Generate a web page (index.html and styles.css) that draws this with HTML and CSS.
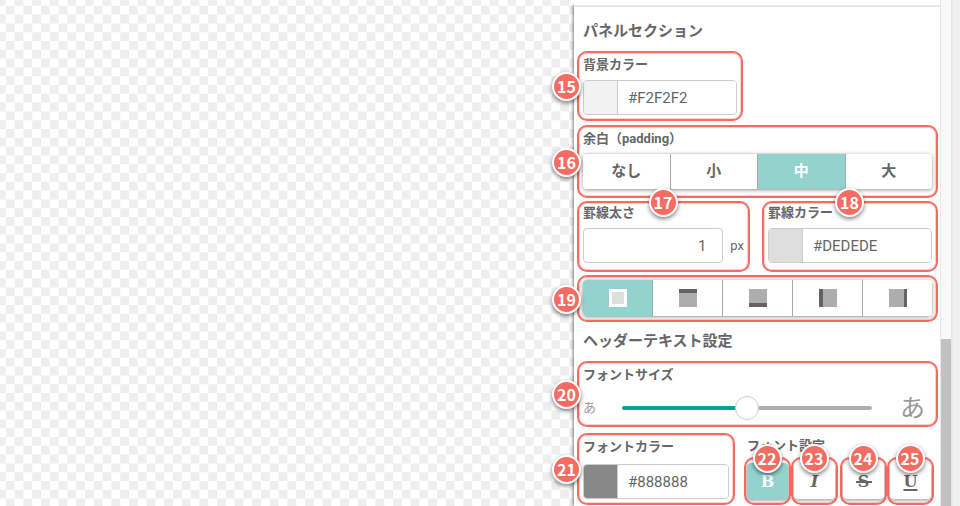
FILE: index.html
```
<!DOCTYPE html>
<html lang="ja">
<head>
  <meta charset="UTF-8">
  <meta name="viewport" content="width=device-width, initial-scale=1.0">
  <title>パネルセクション</title>
  <link rel="stylesheet" href="styles.css">
</head>
<body>
  <div class="editor">
    <main class="canvas"></main>
    <aside class="panel">
      <h2>パネルセクション</h2>

      <div class="group bg-color">
        <span class="badge side">15</span>
        <label for="bgColor">背景カラー</label>
        <div class="color-field">
          <span class="swatch light"></span>
          <input type="text" id="bgColor" value="#F2F2F2">
        </div>
      </div>

      <div class="group padding">
        <span class="badge side">16</span>
        <span class="label">余白（padding）</span>
        <div class="segments">
          <button type="button">なし</button>
          <button type="button">小</button>
          <button type="button" class="active">中</button>
          <button type="button">大</button>
        </div>
      </div>

      <div class="row">
        <div class="group line line-width">
          <span class="badge top">17</span>
          <label for="lineWidth">罫線太さ</label>
          <div class="unit-field">
            <input type="text" id="lineWidth" value="1">
            <span>px</span>
          </div>
        </div>
        <div class="group line line-color">
          <span class="badge top">18</span>
          <label for="lineColor">罫線カラー</label>
          <div class="color-field">
            <span class="swatch silver"></span>
            <input type="text" id="lineColor" value="#DEDEDE">
          </div>
        </div>
      </div>

      <div class="group sides">
        <span class="badge side">19</span>
        <div class="segments">
          <button type="button" class="active" aria-label="全体">
            <svg width="18" height="18" viewBox="0 0 18 18"><path fill="#fff" d="M0 0h18v18H0z"/><path fill="#dedede" d="M3 3h12v12H3z"/></svg>
          </button>
          <button type="button" aria-label="上">
            <svg width="18" height="18" viewBox="0 0 18 18"><path fill="#adadad" d="M0 0h18v18H0z"/><path fill="#636363" d="M0 0h18v4H0z"/></svg>
          </button>
          <button type="button" aria-label="下">
            <svg width="18" height="18" viewBox="0 0 18 18"><path fill="#adadad" d="M0 0h18v18H0z"/><path fill="#636363" d="M0 14h18v4H0z"/></svg>
          </button>
          <button type="button" aria-label="左">
            <svg width="18" height="18" viewBox="0 0 18 18"><path fill="#adadad" d="M0 0h18v18H0z"/><path fill="#636363" d="M0 0h4v18H0z"/></svg>
          </button>
          <button type="button" aria-label="右">
            <svg width="18" height="18" viewBox="0 0 18 18"><path fill="#adadad" d="M0 0h18v18H0z"/><path fill="#636363" d="M15 0h3v18h-3z"/></svg>
          </button>
        </div>
      </div>

      <h2 class="second">ヘッダーテキスト設定</h2>

      <div class="group font-size">
        <span class="badge side">20</span>
        <label for="fontSize">フォントサイズ</label>
        <div class="slider">
          <span class="small">あ</span>
          <input type="range" id="fontSize" min="0" max="100" value="50">
          <span class="large">あ</span>
        </div>
      </div>

      <div class="row last">
        <div class="group font-color">
          <span class="badge side">21</span>
          <label for="fontColor">フォントカラー</label>
          <div class="color-field">
            <span class="swatch gray"></span>
            <input type="text" id="fontColor" value="#888888">
          </div>
        </div>
        <div class="font-style">
          <span class="label">フォント設定</span>
          <div class="style-buttons">
            <div class="group style">
              <span class="badge top">22</span>
              <button type="button" class="bold active">B</button>
            </div>
            <div class="group style">
              <span class="badge top">23</span>
              <button type="button" class="italic">I</button>
            </div>
            <div class="group style split">
              <span class="badge top">24</span>
              <button type="button" class="strike">S</button>
            </div>
            <div class="group style">
              <span class="badge top">25</span>
              <button type="button" class="underline">U</button>
            </div>
          </div>
        </div>
      </div>
    </aside>
    <div class="scrollbar"><div class="thumb"></div></div>
    <div class="gutter"></div>
  </div>
</body>
</html>
```
FILE: styles.css
```
* {
  box-sizing: border-box;
}

body {
  margin: 0;
  color: #666;
  font-family: Roboto, "Noto Sans CJK JP", sans-serif;
  font-size: 13px;
}

.editor {
  display: flex;
  height: 100vh;
  overflow: hidden;
}

.canvas {
  flex: 1;
  background-color: #fff;
  background-image: url("data:image/svg+xml,%3Csvg xmlns='http://www.w3.org/2000/svg' viewBox='0 0 10 10'%3E%3Cpath fill='%23eee' d='M0 0h1v1H0zM2 0h1v1H2zM4 0h1v1H4zM6 0h1v1H6zM8 0h1v1H8zM1 1h1v1H1zM3 1h1v1H3zM5 1h1v1H5zM7 1h1v1H7zM9 1h1v1H9zM0 2h1v1H0zM2 2h1v1H2zM4 2h1v1H4zM6 2h1v1H6zM8 2h1v1H8zM1 3h1v1H1zM3 3h1v1H3zM5 3h1v1H5zM7 3h1v1H7zM9 3h1v1H9zM0 4h1v1H0zM2 4h1v1H2zM4 4h1v1H4zM6 4h1v1H6zM8 4h1v1H8zM1 5h1v1H1zM3 5h1v1H3zM5 5h1v1H5zM7 5h1v1H7zM9 5h1v1H9zM0 6h1v1H0zM2 6h1v1H2zM4 6h1v1H4zM6 6h1v1H6zM8 6h1v1H8zM1 7h1v1H1zM3 7h1v1H3zM5 7h1v1H5zM7 7h1v1H7zM9 7h1v1H9zM0 8h1v1H0zM2 8h1v1H2zM4 8h1v1H4zM6 8h1v1H6zM8 8h1v1H8zM1 9h1v1H1zM3 9h1v1H3zM5 9h1v1H5zM7 9h1v1H7zM9 9h1v1H9z'/%3E%3C/svg%3E");
  background-size: 88px 88px;
  background-position: -3px -3px;
}

.panel {
  width: 366px;
  margin-top: 5px;
  padding: 14px 2px 0 3px;
  border-top: 2px solid #e8e8e8;
  background-color: #fff;
  box-shadow: 0 -8px 0 #fff, -1px 0 3px rgba(0, 0, 0, 0.5);
}

h2 {
  margin: 0;
  padding-left: 6px;
  font-size: 15px;
  line-height: 20px;
}

h2.second {
  margin: 9px 0 10px;
}

.group {
  position: relative;
  padding: 4px;
  border: 2px solid #f66c63;
  border-radius: 10px;
  box-shadow: inset 0 0 0 1px #fcd0cd;
}

label,
.label {
  display: block;
  font-weight: bold;
  line-height: 16px;
  margin-bottom: 7px;
}

.badge {
  position: absolute;
  z-index: 1;
  width: 29px;
  height: 29px;
  border: 2px solid #fff;
  border-radius: 50%;
  background-color: #f66c63;
  color: #fff;
  font: bold 16px/24px "Noto Sans CJK JP", sans-serif;
  text-align: center;
  box-shadow: 0 2px 4px rgba(0, 0, 0, 0.5);
}

.badge.side {
  left: -27px;
  top: calc(50% - 14px);
}

.badge.top {
  left: calc(50% - 15px);
  top: -15px;
}

.bg-color {
  width: 166px;
  margin-top: 10px;
}

.padding {
  margin-top: 4px;
  padding-bottom: 7px;
}

.row {
  display: flex;
  justify-content: space-between;
  margin-top: 3px;
}

.line {
  padding-top: 2px;
  padding-bottom: 7px;
}

.line-width {
  width: 173px;
}

.line-color {
  width: 176px;
}

.color-field {
  display: flex;
  height: 35px;
  border: 1px solid #ccc;
  border-radius: 4px;
  overflow: hidden;
}

.swatch {
  width: 34px;
  border-right: 1px solid #ccc;
}

.swatch.light {
  background-color: #f2f2f2;
}

.swatch.silver {
  background-color: #dedede;
}

.swatch.gray {
  background-color: #888;
}

input[type="text"] {
  min-width: 0;
  border: none;
  background-color: #fff;
  color: #666;
  font: 15px Roboto, sans-serif;
}

.color-field input {
  flex: 1;
  padding: 0 10px;
}

.unit-field {
  display: flex;
  align-items: center;
  gap: 7px;
  height: 35px;
}

.unit-field input[type="text"] {
  width: 141px;
  height: 35px;
  padding: 0 16px;
  border: 1px solid #ccc;
  border-radius: 4px;
  text-align: right;
}

.segments {
  display: flex;
  height: 35px;
  border-radius: 4px;
  box-shadow: 0 1px 4px rgba(0, 0, 0, 0.4);
}

button {
  flex: 1;
  padding: 0;
  border: none;
  background-color: #fff;
  color: #666;
  font: bold 15px Roboto, "Noto Sans CJK JP", sans-serif;
  cursor: pointer;
}

.segments button {
  border-right: 1px solid #aaa;
  box-shadow: 1px 0 2px rgba(0, 0, 0, 0.15);
}

.padding button {
  padding-bottom: 5px;
}

.segments button:first-child {
  border-radius: 4px 0 0 4px;
}

.segments button:last-child {
  border-right: none;
  border-radius: 0 4px 4px 0;
  box-shadow: none;
}

button.active {
  background-color: #92d3cd;
  color: #fff;
}

.segments button.active {
  border-right-color: #8bbab6;
}

button svg {
  display: block;
  margin: auto;
}

.sides {
  margin-top: 3px;
  padding: 3px 4px 4px;
}

.sides .segments {
  height: 36px;
}

.font-size {
  height: 66px;
}

.slider {
  display: flex;
  align-items: center;
  height: 36px;
  color: #999;
  font-family: "Noto Sans CJK JP", sans-serif;
}

.slider .small {
  width: 39px;
  padding-bottom: 4px;
  font-size: 13px;
}

.slider .large {
  width: 32px;
  padding-bottom: 5px;
  font-size: 25px;
}

.slider input {
  flex: 1;
  min-width: 0;
  height: 24px;
  margin: 0 28px 0 0;
  background: none;
  appearance: none;
}

.slider input::-webkit-slider-runnable-track {
  height: 4px;
  border-radius: 2px;
  background: linear-gradient(to right, #00a396 50%, #b0b0b0 50%);
}

.slider input::-webkit-slider-thumb {
  width: 24px;
  height: 24px;
  margin-top: -10px;
  border: 1px solid #ccc;
  border-radius: 50%;
  background-color: #fff;
  appearance: none;
}

.row.last {
  justify-content: flex-start;
  gap: 9px;
  margin-top: 6px;
}

.font-color {
  width: 158px;
  height: 72px;
}

.font-color label {
  margin-bottom: 9px;
}

.font-style {
  padding-top: 5px;
}

.font-style .label {
  margin-bottom: 3px;
  padding-left: 3px;
}

.style-buttons {
  display: flex;
}

.style {
  display: flex;
  width: 47px;
  height: 48px;
  padding: 4px 1px;
}

.style.split {
  margin-left: 2px;
}

.style button {
  position: relative;
  border-radius: 4px;
  font-size: 16px;
  font-family: "DejaVu Serif", serif;
  box-shadow: 0 2px 3px rgba(0, 0, 0, 0.3);
}

.style .italic {
  font-style: italic;
}

/* strike line is wider than the letter */
.style .strike::after {
  content: "";
  position: absolute;
  top: 50%;
  left: calc(50% - 8px);
  width: 16px;
  height: 2px;
  background-color: #666;
}

.style .underline {
  text-decoration: underline 2px;
  text-underline-offset: 2px;
}

.scrollbar {
  display: flex;
  align-items: flex-end;
  width: 11px;
  border-left: 1px solid #e8e8e8;
  background-color: #f9f9f9;
}

.thumb {
  width: 100%;
  height: 33%;
  background-color: #c1c1c1;
}

.gutter {
  width: 9px;
  background: linear-gradient(to right, #e4e4e4, #f0f0f0 3px);
}
```
